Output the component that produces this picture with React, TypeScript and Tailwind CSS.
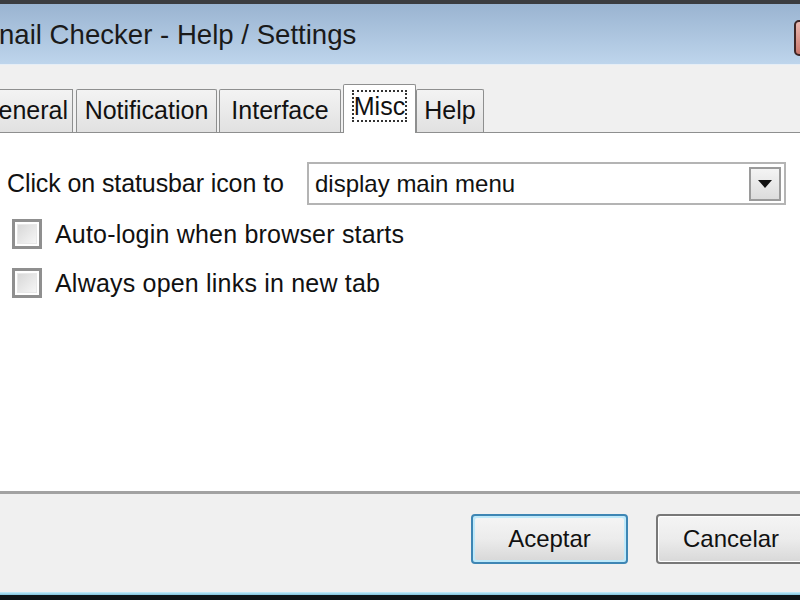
import React from "react";

const font = { fontFamily: '"Liberation Sans", Arial, sans-serif' };

function Tab({ label, w, selected }: { label: string; w: string; selected?: boolean }) {
  if (selected) {
    return (
      <div className={`${w} shrink-0 h-[49px] -mb-px relative z-10 bg-white border border-[#8e8f8f] border-b-0 rounded-t-[2px] flex items-start justify-center pt-[6px]`}>
        <span className="px-[1px] leading-[30px] outline-2 outline-dotted outline-[#333] -outline-offset-1 text-[25px] text-[#111]">{label}</span>
      </div>
    );
  }
  return (
    <div className={`${w} shrink-0 h-[43px] bg-gradient-to-b from-[#f3f3f3] to-[#e1e1e1] border border-[#8e8f8f] border-b-0 rounded-t-[2px] flex items-center justify-center text-[25px] text-[#111]`}>
      {label}
    </div>
  );
}

function Check({ label }: { label: string }) {
  return (
    <div className="flex items-center h-[30px]">
      <div className="ml-[12px] shrink-0 w-[30px] h-[30px] border-[3px] border-[#8f8f8f] p-[2px] bg-white">
        <div className="w-full h-full bg-gradient-to-br from-[#d8d8d8] to-[#f6f6f6] border border-[#e8e8e8]" />
      </div>
      <span className="ml-[13px] text-[25px] tracking-[0.2px] text-[#111] leading-none">{label}</span>
    </div>
  );
}

export default function App() {
  return (
    <div className="w-[800px] h-[600px] overflow-hidden relative bg-[#f0f0f0] flex flex-col" style={font}>
      {/* top frame edge */}
      <div className="h-[4px] shrink-0 bg-[#3b3d40]" />
      {/* title bar */}
      <div className="h-[60px] shrink-0 bg-gradient-to-b from-[#9ab4d1] to-[#bed5ec] flex items-center relative">
        <span className="ml-[-1px] text-[27.6px] text-[#1a1a1a] leading-none pt-[2px] whitespace-nowrap">nail Checker - Help / Settings</span>
        <div className="absolute left-[794px] top-[16px] w-[50px] h-[36px] rounded-[5px] border-2 border-[#3d2626] bg-gradient-to-b from-[#eab8b0] to-[#c9776c]" />
      </div>
      <div className="h-[1px] shrink-0 bg-[#e6eef6]" />
      {/* tabs */}
      <div className="h-[67px] shrink-0 flex items-end">
        <div className="w-[74px] shrink-0 h-[43px] -ml-[1px] bg-gradient-to-b from-[#f3f3f3] to-[#e1e1e1] border border-[#8e8f8f] border-b-0 border-l-0 flex items-center justify-end pr-[4px] text-[25px] text-[#111]">
          eneral
        </div>
        <div className="w-[3px] shrink-0" />
        <Tab label="Notification" w="w-[141px]" />
        <div className="w-[2px] shrink-0" />
        <Tab label="Interface" w="w-[122px]" />
        <div className="w-[2px] shrink-0" />
        <Tab label="Misc" w="w-[73px]" selected />
        <Tab label="Help" w="w-[68px]" />
      </div>
      {/* panel */}
      <div className="h-[362px] shrink-0 bg-white border-t border-[#8e8f8f] border-b-[3px] border-b-[#a2a2a2] flex flex-col">
        <div className="flex items-center mt-[29px] h-[43px]">
          <span className="ml-[7px] w-[300px] shrink-0 text-[25px] tracking-[-0.1px] text-[#111] leading-none whitespace-nowrap">Click on statusbar icon to</span>
          <div className="w-[479px] shrink-0 h-[43px] border-2 border-[#b4b4b4] flex items-center justify-between pl-[6px] pr-[3px]">
            <span className="text-[24px] text-[#111] leading-none">display main menu</span>
            <div className="w-[32px] h-[34px] border-2 border-[#9a9a9a] bg-gradient-to-b from-[#f4f4f4] to-[#dcdcdc] flex items-center justify-center">
              <svg width="14" height="8" viewBox="0 0 14 8"><path d="M0 0 H14 L7 8 Z" fill="#111" /></svg>
            </div>
          </div>
        </div>
        <div className="mt-[14px]">
          <Check label="Auto-login when browser starts" />
        </div>
        <div className="mt-[19px]">
          <Check label="Always open links in new tab" />
        </div>
      </div>
      {/* footer */}
      <div className="flex-1 flex items-start pt-[20px]">
        <div className="ml-[471px] shrink-0 w-[157px] h-[50px] rounded-[4px] border-2 border-[#3e86b4] p-[2px] bg-[#bfe9fa]">
          <div className="w-full h-full rounded-[2px] bg-gradient-to-b from-[#f4f4f4] via-[#ececec] to-[#d9d9d9] flex items-center justify-center text-[24px] text-[#111]">
            Aceptar
          </div>
        </div>
        <div className="ml-[28px] shrink-0 w-[160px] h-[50px] rounded-[4px] border-2 border-[#787878] p-[1px] bg-white">
          <div className="w-full h-full rounded-[2px] bg-gradient-to-b from-[#f4f4f4] via-[#ececec] to-[#d9d9d9] flex items-center pl-[24px] text-[24px] text-[#111]">
            Cancelar
          </div>
        </div>
      </div>
      <div className="h-[3px] shrink-0 bg-gradient-to-b from-[#c7effc] to-[#7fc3dd]" />
      <div className="h-[5px] shrink-0 bg-[#0d1416]" />
    </div>
  );
}
